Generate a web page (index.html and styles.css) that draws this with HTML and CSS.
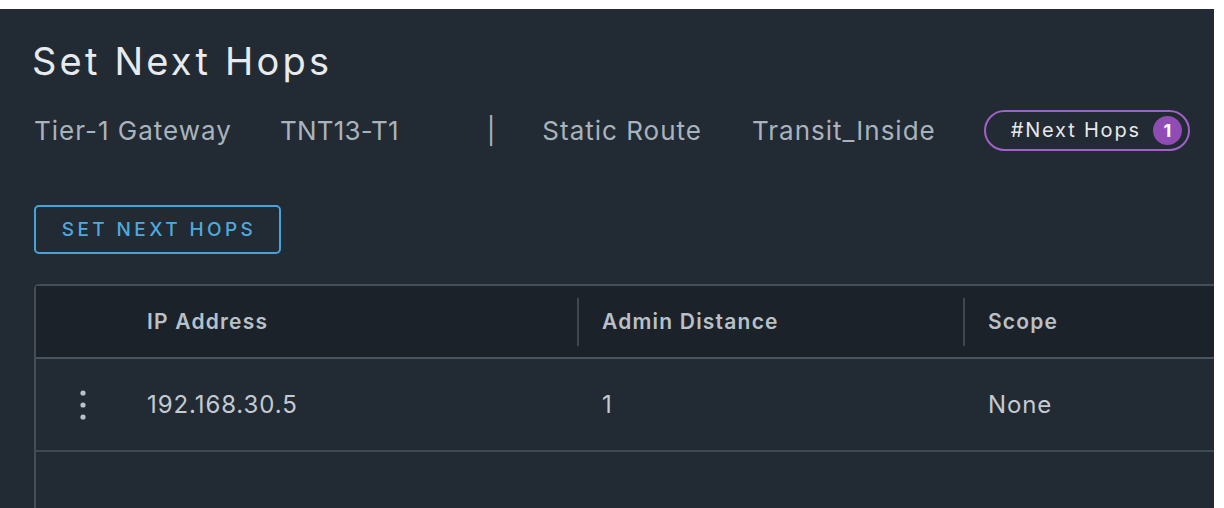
FILE: index.html
```html
<!DOCTYPE html>
<html>
<head>
<meta charset="utf-8">
<link rel="stylesheet" href="styles.css">
</head>
<body>
<div class="panel">
  <h1 class="title">Set Next Hops</h1>
  <div class="meta">
    <span class="m-label">Tier-1 Gateway</span>
    <span class="m-value">TNT13-T1</span>
    <span class="m-sep">|</span>
    <span class="m-label2">Static Route</span>
    <span class="m-value2">Transit_Inside</span>
    <span class="pill"><span class="pill-text">#Next Hops</span><span class="badge">1</span></span>
  </div>
  <button class="btn">SET NEXT HOPS</button>
  <div class="grid">
    <div class="hd hd-first"></div>
    <div class="hd">IP Address</div>
    <div class="hd hd-div">Admin Distance</div>
    <div class="hd hd-div">Scope</div>
    <div class="cell kebab"><svg width="6" height="30" viewBox="0 0 6 30"><circle cx="3" cy="3" r="2.6"/><circle cx="3" cy="15" r="2.6"/><circle cx="3" cy="27" r="2.6"/></svg></div>
    <div class="cell">192.168.30.5</div>
    <div class="cell">1</div>
    <div class="cell">None</div>
    <div class="empty"></div>
  </div>
</div>
</body>
</html>
```
FILE: styles.css
```css
html, body { margin: 0; padding: 0; background: #ffffff; }
body { font-family: Inter, Lato, sans-serif; }
.panel {
  margin-top: 9px;
  width: 1214px;
  height: 499px;
  background: #222a33;
  padding-left: 32px;
  box-sizing: border-box;
  overflow: hidden;
}
.title {
  margin: 0;
  padding-top: 26px;
  font-size: 38px;
  line-height: 52px;
  font-weight: 400;
  color: #e8ebee;
  letter-spacing: 3.2px;
}
.meta {
  display: flex;
  align-items: center;
  margin-top: 23px;
  height: 40px;
  font-size: 26px;
  letter-spacing: 1px;
  color: #a9b3bc;
  padding-left: 2px;
}
.m-value { margin-left: 48px; letter-spacing: 0.2px; }
.m-sep { margin-left: 88px; }
.m-label2 { margin-left: 46px; }
.m-value2 { margin-left: 50px; }
.pill {
  margin-left: 48px;
  display: inline-flex;
  align-items: center;
  height: 41px;
  box-sizing: border-box;
  border: 2px solid #a062c6;
  border-radius: 21px;
  padding: 0 6px 0 25px;
  font-size: 20px;
  letter-spacing: 1.8px;
  color: #e6e9ec;
}
.badge {
  margin-left: 12px;
  width: 29px;
  height: 29px;
  border-radius: 50%;
  background: #8f4cb5;
  color: #ffffff;
  font-weight: 700;
  font-size: 18px;
  letter-spacing: 0;
  display: inline-flex;
  align-items: center;
  justify-content: center;
}
.btn {
  display: block;
  margin-top: 55px;
  margin-left: 2px;
  width: 247px;
  height: 49px;
  background: transparent;
  border: 2px solid #4aa3d8;
  border-radius: 5px;
  color: #4fa9df;
  font-family: Inter, sans-serif;
  font-size: 19px;
  font-weight: 500;
  letter-spacing: 3.4px;
  padding: 0 0 0 3px;
}
.grid {
  margin-top: 30px;
  margin-left: 2px;
  width: 1240px;
  display: grid;
  grid-template-columns: 86px 455px 386px 1fr;
  grid-template-rows: 73px 93px 60px;
  border: 2px solid #444e58;
  border-right: none;
  border-radius: 5px 0 0 0;
}
.hd {
  background: #1c2229;
  border-bottom: 2px solid #4a545e;
  color: #b8c0c8;
  font-weight: 600;
  font-size: 21px;
  letter-spacing: 1.2px;
  display: flex;
  align-items: center;
  padding-left: 25px;
  position: relative;
}
.hd-first { padding: 0; }
.hd-div::before {
  content: "";
  position: absolute;
  left: 0;
  top: 12px;
  bottom: 11px;
  width: 2px;
  background: #3e4852;
}
.cell {
  display: flex;
  align-items: center;
  padding-left: 25px;
  font-size: 24px;
  letter-spacing: 0.9px;
  color: #c3cad1;
  border-bottom: 2px solid #3e4852;
}
.kebab { padding-left: 44px; }
.kebab svg { fill: #b9c1c9; }
.empty { grid-column: 1 / -1; }
```
